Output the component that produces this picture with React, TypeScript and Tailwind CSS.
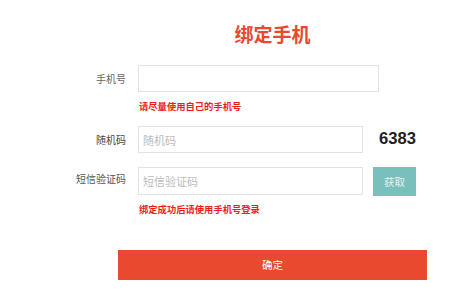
import React from "react";

const cjk = { fontFamily: '"Noto Sans CJK SC", "Noto Sans", sans-serif' };

export default function App() {
  return (
    <div className="w-[475px] h-[298px] bg-white overflow-hidden relative" style={cjk}>
      <div className="ml-[118px] w-[309px] mt-[24px] h-[20px] leading-[20px] text-center text-[19px] font-bold text-[#e8492f]">
        绑定手机
      </div>

      <div className="flex items-center mt-[21px] h-[27px]">
        <div className="w-[126px] text-right text-[10px] text-[#666]">手机号</div>
        <input
          className="ml-[12px] w-[241px] h-[27px] border border-[#e2e2e2] outline-none px-[4px] text-[11px]"
          style={cjk}
        />
      </div>
      <div className="ml-[139px] mt-[8px] h-[12px] leading-[12px] text-[9.3px] font-bold text-[#f21b1b]">
        请尽量使用自己的手机号
      </div>

      <div className="flex items-center mt-[14px] h-[27px]">
        <div className="w-[126px] text-right text-[10px] text-[#444]">随机码</div>
        <input
          placeholder="随机码"
          className="ml-[12px] w-[225px] h-[27px] border border-[#e2e2e2] outline-none px-[4px] text-[11px] placeholder:text-[#bbbbbb]"
          style={cjk}
        />
        <div
          className="ml-[16px] text-[16.6px] font-bold text-[#222]"
          style={{ fontFamily: '"Liberation Sans", Arial, sans-serif' }}
        >
          6383
        </div>
      </div>

      <div className="flex items-start mt-[14px] h-[29px]">
        <div className="w-[126px] h-[24px] leading-[24px] text-right text-[10px] text-[#555]">短信验证码</div>
        <input
          placeholder="短信验证码"
          className="ml-[12px] w-[225px] h-[28px] border border-[#e2e2e2] outline-none px-[4px] text-[11px] placeholder:text-[#bbbbbb]"
          style={cjk}
        />
        <button
          className="ml-[10px] w-[43px] h-[29px] bg-[#79bfbb] text-[10.5px] text-[#e4f3f2]"
          style={cjk}
        >
          获取
        </button>
      </div>
      <div className="ml-[139px] mt-[7px] h-[12px] leading-[12px] text-[9.3px] font-bold text-[#f21b1b]">
        绑定成功后请使用手机号登录
      </div>

      <button
        className="block ml-[118px] mt-[35px] w-[309px] h-[30px] bg-[#e8492f] text-white text-[10.5px]"
        style={cjk}
      >
        确定
      </button>
    </div>
  );
}
